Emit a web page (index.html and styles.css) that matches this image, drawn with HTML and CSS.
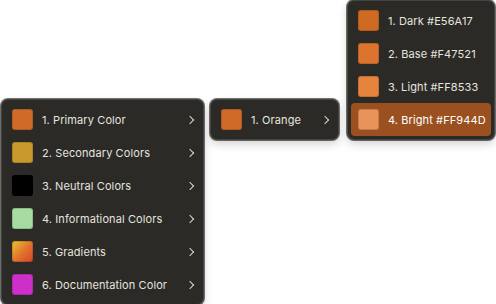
FILE: index.html
```html
<!DOCTYPE html>
<html lang="en">
<head>
  <meta charset="UTF-8" />
  <meta name="viewport" content="width=device-width, initial-scale=1.0"/>
  <title>Color Menu</title>
  <link rel="stylesheet" href="styles.css">
</head>
<body>
  <div class="menu menu-main">
    <div class="item"><span class="swatch primary"></span><span class="label">1. Primary Color</span><span class="chevron"></span></div>
    <div class="item"><span class="swatch secondary"></span><span class="label">2. Secondary Colors</span><span class="chevron"></span></div>
    <div class="item"><span class="swatch neutral"></span><span class="label">3. Neutral Colors</span><span class="chevron"></span></div>
    <div class="item"><span class="swatch info"></span><span class="label">4. Informational Colors</span><span class="chevron"></span></div>
    <div class="item"><span class="swatch gradient"></span><span class="label">5. Gradients</span><span class="chevron"></span></div>
    <div class="item"><span class="swatch docs"></span><span class="label">6. Documentation Color</span><span class="chevron"></span></div>
  </div>

  <div class="menu menu-sub">
    <div class="item"><span class="swatch primary"></span><span class="label">1. Orange</span><span class="chevron"></span></div>
  </div>

  <div class="menu menu-shades">
    <div class="item"><span class="swatch dark"></span><span class="label">1. Dark #E56A17</span></div>
    <div class="item"><span class="swatch base"></span><span class="label">2. Base #F47521</span></div>
    <div class="item"><span class="swatch light"></span><span class="label">3. Light #FF8533</span></div>
    <div class="item active"><span class="swatch bright"></span><span class="label">4. Bright #FF944D</span></div>
  </div>
</body>
</html>
```

FILE: styles.css
```css
body {
  margin: 0;
  background: #fff;
  font-family: Inter, "Noto Sans", sans-serif;
  font-size: 11px;
  width: 496px;
  height: 304px;
  position: relative;
  overflow: hidden;
}

.menu {
  position: absolute;
  box-sizing: border-box;
  padding: 3px;
  background: #2b2a27;
  border: 1px solid #45443f;
  border-radius: 7px;
  box-shadow: 0 0 0 1px rgba(0,0,0,0.55), 0 4px 10px rgba(0,0,0,0.18);
  display: flex;
  flex-direction: column;
}

.menu-main {
  left: 1px;
  top: 99px;
  width: 203px;
}

.menu-sub {
  left: 210px;
  top: 99px;
  width: 129px;
}

.menu-shades {
  left: 347px;
  top: 0;
  width: 148px;
}

.item {
  height: 33px;
  display: flex;
  align-items: center;
  padding: 0 7px;
  border-radius: 4px;
  color: #e6e4df;
}

.item.active {
  background: #9b501f;
  color: #fff;
}

.swatch {
  width: 21px;
  height: 21px;
  border-radius: 3px;
  box-shadow: inset 0 0 0 1px rgba(0,0,0,0.15);
  flex-shrink: 0;
}

.label {
  margin-left: 9px;
  flex: 1;
  white-space: nowrap;
  letter-spacing: 0.1px;
}

.chevron {
  width: 5px;
  height: 5px;
  border-top: 1.5px solid #d8d6d1;
  border-right: 1.5px solid #d8d6d1;
  transform: rotate(45deg);
  margin-right: 0;
}

.primary { background: #d06a28; }
.secondary { background: #c99a2b; }
.neutral { background: #000; }
.info { background: #a6dca2; }
.gradient { background: linear-gradient(135deg, #eab52c 10%, #e0702e 55%, #d2472c 100%); }
.docs { background: #cf2fc9; }

.dark { background: #cf6a22; }
.base { background: #dc7430; }
.light { background: #e5843c; }
.bright { background: #e9935a; }
```
